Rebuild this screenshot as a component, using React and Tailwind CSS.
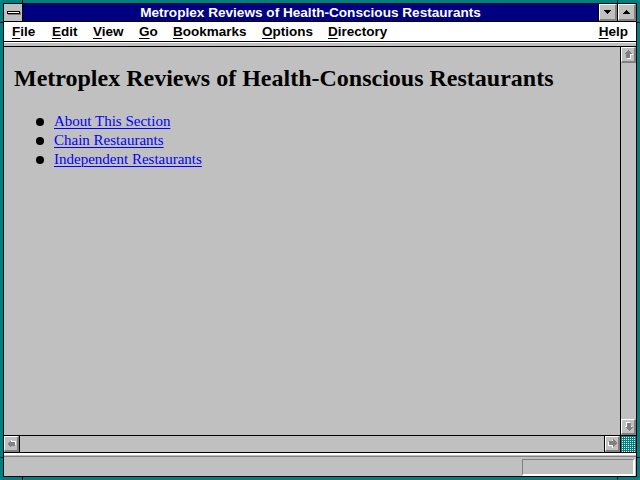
import React from "react";

const bevel =
  "bg-[#c0c0c0] border-t border-l border-b-2 border-r-2 border-t-white border-l-white border-b-[#808080] border-r-[#808080]";

function ScrollArrow({ dir = "up" }) {
  const rot = { up: 0, right: 90, down: 180, left: 270 }[dir];
  return (
    <svg width="9" height="9" viewBox="0 0 9 9" shapeRendering="crispEdges">
      <g transform={`rotate(${rot} 4.5 4.5)`}>
        <polygon points="5,1 9,5 7,5 7,9 3,9 3,5 1,5" fill="#ffffff" />
        <polygon points="4,0 8,4 6,4 6,8 2,8 2,4 0,4" fill="#808080" />
      </g>
    </svg>
  );
}

function ScrollButton({ dir, className = "" }) {
  return (
    <div className={`${bevel} flex items-center justify-center ${className}`}>
      <ScrollArrow dir={dir} />
    </div>
  );
}

function CaptionButton({ up }) {
  return (
    <div className="w-[19px] border-l border-black">
      <div className={`${bevel} h-full flex items-center justify-center`}>
        <svg width="7" height="4" viewBox="0 0 7 4" shapeRendering="crispEdges">
          {up ? (
            <polygon points="3.5,0 7,4 0,4" fill="#000" />
          ) : (
            <polygon points="0,0 7,0 3.5,4" fill="#000" />
          )}
        </svg>
      </div>
    </div>
  );
}

function MenuItem({ label, w }) {
  return (
    <span className={`${w} shrink-0`}>
      <span className="underline decoration-1 underline-offset-[2px]">{label[0]}</span>
      {label.slice(1)}
    </span>
  );
}

const links = ["About This Section", "Chain Restaurants", "Independent Restaurants"];

export default function App() {
  return (
    <div className="relative w-[640px] h-[480px] bg-[#008080] p-[3px] font-['Liberation_Sans',Arial,sans-serif] overflow-hidden">
      {/* resize corner ticks on the frame */}
      <div className="absolute left-[22px] top-0 w-px h-[3px] bg-black" />
      <div className="absolute left-[617px] top-0 w-px h-[3px] bg-black" />
      <div className="absolute left-[22px] bottom-0 w-px h-[3px] bg-black" />
      <div className="absolute left-[617px] bottom-0 w-px h-[3px] bg-black" />
      <div className="absolute left-0 top-[22px] w-[3px] h-px bg-black" />
      <div className="absolute left-0 top-[457px] w-[3px] h-px bg-black" />
      <div className="absolute right-0 top-[22px] w-[3px] h-px bg-black" />
      <div className="absolute right-0 top-[457px] w-[3px] h-px bg-black" />

      <div className="h-full border border-black flex flex-col bg-[#c0c0c0]">
        {/* title bar */}
        <div className="h-[18px] flex border-b border-black shrink-0">
          <div className="w-[19px] border-r border-black bg-[#c0c0c0] flex items-center justify-center">
            <div className="w-[13px] h-[3px] bg-white border border-black shadow-[1px_1px_0_#808080]" />
          </div>
          <div className="flex-1 bg-[#000080] text-white font-bold text-[13.6px] leading-[17px] text-center whitespace-nowrap">
            Metroplex Reviews of Health-Conscious Restaurants
          </div>
          <CaptionButton />
          <CaptionButton up />
        </div>

        {/* menu bar */}
        <div className="h-[20px] bg-white border-b border-black flex items-start pl-[8px] pr-[8px] text-[13.5px] leading-[19px] font-bold text-black shrink-0">
          <MenuItem label="File" w="w-[40px]" />
          <MenuItem label="Edit" w="w-[41px]" />
          <MenuItem label="View" w="w-[46px]" />
          <MenuItem label="Go" w="w-[34px]" />
          <MenuItem label="Bookmarks" w="w-[89px]" />
          <MenuItem label="Options" w="w-[66px]" />
          <MenuItem label="Directory" w="w-[80px]" />
          <span className="flex-1" />
          <MenuItem label="Help" w="" />
        </div>

        {/* toolbar strip */}
        <div className="h-[5px] border-t border-white border-b border-b-black bg-[#c0c0c0] shrink-0" />

        {/* document + vertical scrollbar */}
        <div className="flex-1 flex min-h-0">
          <div className="flex-1 bg-[#c0c0c0] pl-[10px] font-['Liberation_Serif','Times_New_Roman',serif] text-black">
            <h1 className="mt-[17px] text-[24px] leading-[28px] font-bold whitespace-nowrap">
              Metroplex Reviews of Health-Conscious Restaurants
            </h1>
            <ul className="mt-[20px]">
              {links.map((t) => (
                <li key={t} className="flex items-center h-[19px] text-[15px] leading-[19px]">
                  <span className="ml-[22px] w-[8px] h-[8px] rounded-full bg-black shrink-0" />
                  <a className="ml-[10px] text-[#0000ff] underline decoration-1 underline-offset-[2px]">{t}</a>
                </li>
              ))}
            </ul>
          </div>
          <div className="w-[16px] border-l border-black flex flex-col">
            <ScrollButton dir="up" className="h-[16px]" />
            <div className="flex-1 bg-[#c0c0c0]" />
            <ScrollButton dir="down" className="h-[16px]" />
          </div>
        </div>

        {/* horizontal scrollbar */}
        <div className="h-[17px] border-t border-black flex shrink-0">
          <div className="w-[16px] border-r border-black">
            <ScrollButton dir="left" className="h-full" />
          </div>
          <div className="flex-1 bg-[#c0c0c0]" />
          <div className="w-[16px] border-l border-black">
            <ScrollButton dir="right" className="h-full" />
          </div>
          <div className="w-[16px] border-l border-black">
            <svg width="15" height="16" shapeRendering="crispEdges">
              <defs>
                <pattern id="hatch" width="2" height="2" patternUnits="userSpaceOnUse">
                  <rect width="2" height="2" fill="#008080" />
                  <rect x="1" y="1" width="1" height="1" fill="#ffffff" />
                </pattern>
              </defs>
              <rect width="15" height="16" fill="url(#hatch)" />
            </svg>
          </div>
        </div>

        {/* status bar */}
        <div className="h-[24px] border-t border-black flex flex-col shrink-0">
          <div className="h-[2px] bg-white" />
          <div className="h-px bg-[#c0c0c0]" />
          <div className="h-px bg-[#808080]" />
          <div className="flex-1 flex justify-end items-end pr-px">
            <div className="w-[113px] h-[17px] border-t border-l border-[#808080] border-b-2 border-r-2 border-b-white border-r-white" />
          </div>
        </div>
      </div>
    </div>
  );
}
